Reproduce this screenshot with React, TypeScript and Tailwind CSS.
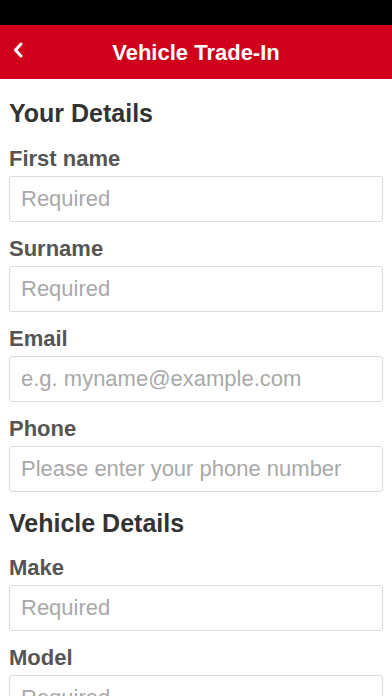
import React from 'react';

const fieldsTop = [
  { label: 'First name', placeholder: 'Required' },
  { label: 'Surname', placeholder: 'Required' },
  { label: 'Email', placeholder: 'e.g. myname@example.com' },
  { label: 'Phone', placeholder: 'Please enter your phone number' },
];

const fieldsVehicle = [
  { label: 'Make', placeholder: 'Required' },
  { label: 'Model', placeholder: 'Required' },
];

const Field: React.FC<{ label: string; placeholder: string }> = ({ label, placeholder }) => (
  <div>
    <label className="block pt-[15px] pb-[5px] text-[22px] leading-[24px] font-bold text-[#555555]">{label}</label>
    <input
      type="text"
      placeholder={placeholder}
      className="block w-full h-[46px] px-[11px] border border-[#dcdcdc] rounded-[3px] bg-white text-[22px] text-[#333] placeholder:text-[#a9a9a9] outline-none"
    />
  </div>
);

export default function App() {
  return (
    <div className="w-[392px] h-[696px] overflow-hidden bg-white font-['Liberation_Sans',Arial,sans-serif]">
      <div className="h-[25px] bg-black" />
      <header className="relative h-[54px] bg-[#d0021b] flex items-center justify-center">
        <button className="absolute left-[11px] top-[14px] text-white" aria-label="Back">
          <svg width="14" height="22" viewBox="0 0 14 22" fill="none">
            <path d="M10 5 L4.5 11 L10 17" stroke="white" strokeWidth="3" strokeLinecap="round" strokeLinejoin="round" />
          </svg>
        </button>
        <h1 className="text-white text-[22px] font-bold">Vehicle Trade-In</h1>
      </header>

      <main className="px-[9px]">
        <h2 className="pt-[20px] text-[25px] leading-[28px] font-bold text-[#333333]">Your Details</h2>
        <div className="-mt-[23px] pt-[28px]">
          {fieldsTop.map(f => (
            <Field key={f.label} {...f} />
          ))}
        </div>
        <h2 className="pt-[17px] text-[25px] leading-[28px] font-bold text-[#333333]">Vehicle Details</h2>
        <div className="-mt-[24px] pt-[28px]">
          {fieldsVehicle.map(f => (
            <Field key={f.label} {...f} />
          ))}
        </div>
      </main>
    </div>
  );
}
